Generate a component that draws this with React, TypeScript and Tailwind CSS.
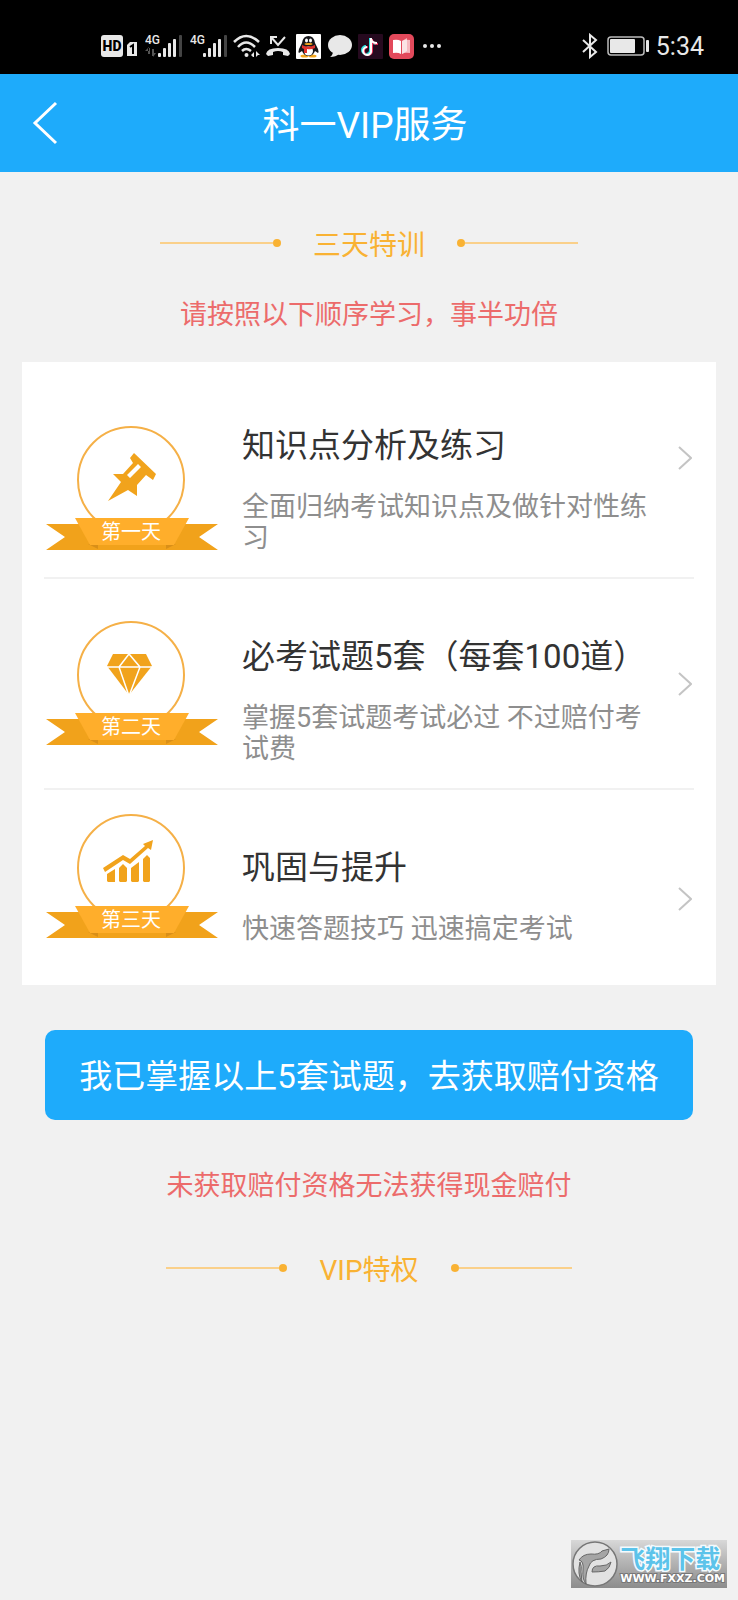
import React from 'react';

type Lesson = {
  day: string;
  title: string;
  desc: string;
  icon: React.ReactNode;
  badgeClass: string;
  textClass: string;
  arrowClass: string;
};

const PinIcon = () => (
  <g fill="#f1a31c">
    <path
      fillRule="evenodd"
      d="M88 27L110 48L107 54L100 49L91 59V70L82 64L62 75L75 56L67 48H77L87 37L84 32ZM92 38L81 49L84 52L95 41Z"
    />
  </g>
);

const DiamondIcon = () => (
  <g>
    <path fill="#f1a31c" d="M67 33H100L106 45L83 74L61 45Z" />
    <path fill="none" stroke="#fff" strokeWidth="1.5" d="M60 46H107M73 46L83 33L94 46L83 75Z" />
  </g>
);

const ChartIcon = () => (
  <g fill="#f1a31c">
    <path d="M57 54L77 41L84 45L99 32L97 30L107 26L105 36L102 34L84 50L77 46L59 58Z" />
    <path d="M61 60L69 55V68H62L61 67ZM73 54L77 50L81 54V67L80 68H74L73 67ZM85 54L93 48V67L92 68H86L85 67ZM97 45L101 41L104 44V67L103 68H98L97 67Z" />
  </g>
);

const lessons: Lesson[] = [
  {
    day: '第一天',
    title: '知识点分析及练习',
    desc: '全面归纳考试知识点及做针对性练习',
    icon: <PinIcon />,
    badgeClass: 'mt-16',
    textClass: 'pt-[60px] pb-[23px]',
    arrowClass: 'mt-[84px]',
  },
  {
    day: '第二天',
    title: '必考试题5套（每套100道）',
    desc: '掌握5套试题考试必过 不过赔付考试费',
    icon: <DiamondIcon />,
    badgeClass: 'mt-[42px]',
    textClass: 'pt-[54px] pb-[23px]',
    arrowClass: 'mt-[93px]',
  },
  {
    day: '第三天',
    title: '巩固与提升',
    desc: '快速答题技巧 迅速搞定考试',
    icon: <ChartIcon />,
    badgeClass: 'mt-6',
    textClass: 'pt-[54px] pb-10',
    arrowClass: 'mt-[97px]',
  },
];

const Signal: React.FC<{ data?: boolean }> = ({ data }) => (
  <svg width="38" height="26" viewBox="0 0 38 26" fill="#e8e8e8">
    <text x="0" y="11" fontSize="12" fontWeight="500" fontFamily="Roboto, sans-serif">
      4G
    </text>
    {data && <path fill="#555" d="M3 15v6h2v-6zM0 18l4-4v4zM7 16v7h2v-7zM8 24l3-4H8z" />}
    <rect x="13" y="20" width="3" height="4" rx="1" />
    <rect x="18" y="15" width="3" height="9" rx="1" />
    <rect x="23" y="10" width="3" height="14" rx="1" />
    <rect x="28" y="6" width="3" height="18" rx="1" />
    <rect x="34" y="2" width="3" height="22" rx="1" fill="#444" />
  </svg>
);

const StatusBar = () => (
  <div className="flex h-[74px] items-center justify-between bg-black pt-[18px] pr-[34px] pl-[101px] text-[#e8e8e8]">
    <div className="flex items-center">
      {/* HD + SIM */}
      <svg width="36" height="24" viewBox="0 0 36 24">
        <rect x="0" y="1" width="22" height="22" rx="3" fill="#e8e8e8" />
        <text x="11" y="17" fontSize="14" fontWeight="900" fontFamily="Roboto, sans-serif" textAnchor="middle" fill="#000">
          HD
        </text>
        <path fill="#e8e8e8" d="M26 11l3-3h7v14H26z" />
        <path fill="none" stroke="#000" strokeWidth="2" d="M29 13l3-2v9" />
      </svg>
      <div className="ml-2 flex gap-[7px]">
        <Signal data />
        <Signal />
      </div>
      {/* Wi-Fi */}
      <svg className="ml-[5px]" width="28" height="24" viewBox="0 0 28 24" fill="none" stroke="#e8e8e8" strokeWidth="2.5">
        <path d="M1 8Q13 -4 26 8M5 13Q13 4 22 13M9 17Q13 13 18 17" />
        <circle cx="13.5" cy="21" r="2" fill="#e8e8e8" stroke="none" />
        <path fill="#e8e8e8" stroke="none" d="M18 21l3-3v5h-1zM23 17l4 4h-2l-2 2z" />
      </svg>
      {/* Missed call */}
      <svg className="ml-[5px]" width="24" height="24" viewBox="0 0 24 24">
        <path fill="none" stroke="#e8e8e8" strokeWidth="2" d="M5 10V3h6M5 3l7 8 7-8" />
        <path fill="#e8e8e8" d="M0 20Q1 14 12 14Q23 14 24 20L22 22L17 21V18Q12 16 7 18V21L2 22Z" />
      </svg>
      {/* QQ */}
      <svg className="ml-[6px]" width="25" height="25" viewBox="0 0 25 25">
        <rect width="25" height="25" rx="1" fill="#fff" />
        <ellipse cx="8.5" cy="22" rx="4" ry="1.5" fill="#f4a51c" />
        <ellipse cx="16.5" cy="22" rx="4" ry="1.5" fill="#f4a51c" />
        <path fill="#16161a" d="M12.5 2Q18 2 19 9L22 15Q23 18 22 19L19 17Q17 22 12.5 22T6 17L3 19Q2 18 3 15L6 9Q7 2 12.5 2Z" />
        <ellipse cx="12.5" cy="17" rx="4.5" ry="4.5" fill="#fff" />
        <ellipse cx="10.5" cy="6.5" rx="1.5" ry="2" fill="#fff" />
        <ellipse cx="14.5" cy="6.5" rx="1.5" ry="2" fill="#fff" />
        <ellipse cx="12.5" cy="10" rx="4" ry="1" fill="#f4a51c" />
        <path fill="#e0322d" d="M6 11Q12 14 19 11V14Q15 16 11 15V19H8V15L6 14Z" />
      </svg>
      {/* Chat bubble */}
      <svg className="ml-[7px]" width="24" height="24" viewBox="0 0 24 24" fill="#e8e8e8">
        <ellipse cx="12" cy="11" rx="12" ry="10" />
        <path d="M5 17q0 4-3 6 6 0 9-3z" />
      </svg>
      {/* TikTok */}
      <svg className="ml-[6px]" width="25" height="25" viewBox="0 0 25 25" fill="none" strokeWidth="2">
        <rect width="25" height="25" rx="1" fill="#260a1f" />
        <path stroke="#2ee5e3" d="M12 4v12a4 4 0 1 1-4-4M12 5q1 4 6 5" />
        <path stroke="#ee2c57" d="M14 5v12a4 4 0 1 1-4-4M14 6q1 4 6 4" />
        <path stroke="#fff" d="M13 4v12a4 4 0 1 1-4-3M13 5q1 4 6 4" />
      </svg>
      {/* Book */}
      <svg className="ml-[6px]" width="25" height="25" viewBox="0 0 25 25">
        <rect width="25" height="25" rx="5" fill="#e2495b" />
        <path fill="#fff" d="M4 6q5-1 8 1v13q-3-2-8-1z" />
        <path fill="#f6b9bf" d="M13 7q3-2 8-1v13q-5-1-8 1z" />
        <path fill="#fff" d="M13 7l5-3v13l-5 3z" opacity=".6" />
      </svg>
      <svg className="ml-2" width="20" height="6" viewBox="0 0 20 6" fill="#e8e8e8">
        <circle cx="3" cy="3" r="2" />
        <circle cx="10" cy="3" r="2" />
        <circle cx="17" cy="3" r="2" />
      </svg>
    </div>

    <div className="flex items-center">
      <svg width="16" height="26" viewBox="0 0 16 26" fill="none" stroke="#e8e8e8" strokeWidth="2">
        <path d="M1 7l13 12-6 5V2l6 5L1 19" />
      </svg>
      <svg className="ml-[9px]" width="42" height="20" viewBox="0 0 42 20">
        <rect x="1" y="1" width="36" height="18" rx="3" fill="none" stroke="#bbb" strokeWidth="1.5" />
        <rect x="3" y="3" width="25" height="14" rx="1" fill="#e8e8e8" />
        <rect x="39" y="4" width="3" height="12" rx="1" fill="#e8e8e8" />
      </svg>
      <span className="ml-[7px] pt-[2px] text-[25px] leading-8">5:34</span>
    </div>
  </div>
);

const SectionTitle: React.FC<{ children: React.ReactNode }> = ({ children }) => (
  <div className="flex items-center justify-center gap-8 text-[28px] leading-9 text-[#f9b233]">
    <span className="flex w-[121px] items-center">
      <span className="h-[2px] flex-1 bg-[#fad08a]" />
      <span className="size-2 rounded-full bg-[#f9b233]" />
    </span>
    <h2 className="pt-[6px]">{children}</h2>
    <span className="flex w-[121px] items-center">
      <span className="size-2 rounded-full bg-[#f9b233]" />
      <span className="h-[2px] flex-1 bg-[#fad08a]" />
    </span>
  </div>
);

const DayBadge: React.FC<{ day: string; children: React.ReactNode }> = ({ day, children }) => (
  <svg width="172" height="125" viewBox="0 0 172 125">
    <circle cx="85" cy="54" r="53" fill="#fff" stroke="#f5b047" strokeWidth="2" />
    {children}
    {/* Ribbon */}
    <path fill="#f1a21b" d="M0 98h172l-19 13 19 13H0l19-13z" />
    <path fill="#d98f18" d="M42 118h10v5zM130 118h-10v5z" />
    <path fill="#ffae2b" d="M29 92h114l-15 27H44z" />
    <text
      x="85"
      y="113"
      fontSize="20"
      textAnchor="middle"
      fill="#fff"
      fontFamily="Roboto, 'Noto Sans CJK SC', sans-serif"
    >
      {day}
    </text>
  </svg>
);

const LessonRow: React.FC<{ lesson: Lesson }> = ({ lesson }) => (
  <li className="border-b-2 border-[#f1f1f1] last:border-b-0">
    <a href="#lesson" className="flex items-start">
      <div className={`ml-[2px] shrink-0 ${lesson.badgeClass}`}>
        <DayBadge day={lesson.day}>{lesson.icon}</DayBadge>
      </div>
      <div className={`ml-6 min-w-0 flex-1 ${lesson.textClass}`}>
        <h3 className="text-[33px] leading-[48px] text-[#333]">{lesson.title}</h3>
        <p className="mt-[22px] text-[27px] leading-[31px] text-[#8e8e8e]">{lesson.desc}</p>
      </div>
      <svg
        className={`mr-[2px] ml-6 shrink-0 ${lesson.arrowClass}`}
        width="14"
        height="24"
        viewBox="0 0 14 24"
        fill="none"
        stroke="#c4c4c4"
        strokeWidth="2"
      >
        <path d="M1 1l12 11L1 23" />
      </svg>
    </a>
  </li>
);

const Watermark = () => (
  <div className="mt-auto mr-[11px] mb-3 flex h-12 items-center self-end bg-linear-to-b from-[#d8d8d8] to-[#8c8c8c] pr-[2px] pl-px">
    <svg width="46" height="46" viewBox="0 0 46 46">
      <circle cx="23" cy="23" r="22" fill="#e2e2e2" stroke="#777" strokeWidth="1.5" />
      <path
        fill="#a5a5a5"
        stroke="#666"
        d="M14 43Q10 38 11 29Q12 20 7 19Q11 13 19 13Q27 14 30 10L37 8Q37 15 29 18Q19 18 17 25Q13 32 14 43ZM10 41Q5 33 8 21Q10 25 9 31ZM20 31Q20 24 28 25Q35 25 39 21Q38 27 33 30Q27 31 20 31Z"
      />
    </svg>
    <div className="ml-[2px]">
      <p className="font-['Noto_Sans_CJK_SC',sans-serif] text-[25px] leading-[29px] font-bold text-[#5cc3ea] [-webkit-text-stroke:3px_#f4fbfe] [paint-order:stroke_fill]">
        飞翔下载
      </p>
      <p className="font-['DejaVu_Sans',sans-serif] text-[11px] leading-[14px] font-bold text-white [-webkit-text-stroke:2px_#777] [paint-order:stroke_fill]">
        WWW.FXXZ.COM
      </p>
    </div>
  </div>
);

const App: React.FC = () => {
  return (
    <div className="flex min-h-screen flex-col bg-[#f1f1f1] font-[Roboto,'Noto_Sans_CJK_SC',sans-serif]">
      <StatusBar />

      {/* Header */}
      <header className="grid h-[98px] grid-cols-[1fr_auto_1fr] items-center bg-[#1eabfb] pr-10 pl-8 text-white">
        <button type="button" aria-label="返回" className="justify-self-start">
          <svg width="26" height="44" viewBox="0 0 26 44" fill="none" stroke="currentColor" strokeWidth="3">
            <path d="M24 2L3 22l21 20" />
          </svg>
        </button>
        <h1 className="pt-[6px] text-[37px] leading-[48px]">科一VIP服务</h1>
      </header>

      <main className="flex flex-col pt-[50px]">
        <SectionTitle>三天特训</SectionTitle>
        <p className="mt-[31px] text-center text-[27px] leading-10 text-[#ec6b6b]">请按照以下顺序学习，事半功倍</p>

        {/* Lessons */}
        <ul className="mx-[22px] mt-[27px] bg-white px-[22px]">
          {lessons.map((lesson) => (
            <LessonRow key={lesson.day} lesson={lesson} />
          ))}
        </ul>

        <button
          type="button"
          className="mx-[45px] mt-[45px] h-[90px] rounded-[10px] bg-[#1eabfb] pt-1 text-[33px] leading-[48px] text-white"
        >
          我已掌握以上5套试题，去获取赔付资格
        </button>
        <p className="mt-[46px] mb-[41px] text-center text-[27px] leading-10 text-[#ec6b6b]">
          未获取赔付资格无法获得现金赔付
        </p>
        <SectionTitle>VIP特权</SectionTitle>
      </main>

      <Watermark />
    </div>
  );
};

export default App;
